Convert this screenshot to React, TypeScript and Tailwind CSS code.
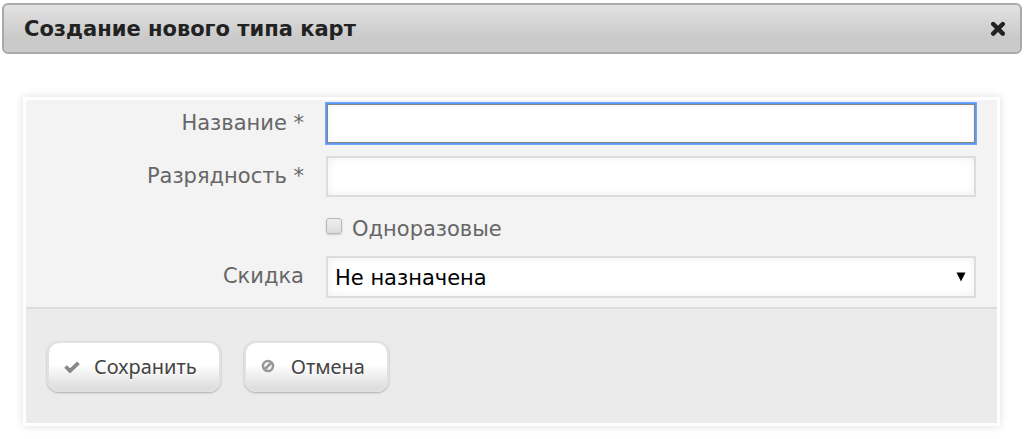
const inputClass =
  "block w-full appearance-none rounded-none border-2 border-[#dcdcdc] bg-white px-[7px] text-black shadow-[inset_0_0_8px_#eeeeee] outline-none";

const labelClass = "pr-[22px] text-right leading-10";

const buttonClass =
  "flex h-[51px] cursor-pointer items-center rounded-xl border-2 border-[#e1e1e1] bg-linear-to-b from-white from-45% to-[#dcdcdc] pr-[22px] pl-[14px] font-['Noto_Sans','Open_Sans',sans-serif] text-xl text-[#444444] shadow-[0_1px_2px_#aaaaaa] [text-shadow:0_1px_0_#ffffff]";

export default function App() {
  return (
    <div
      role="dialog"
      aria-labelledby="dialog-title"
      className="bg-white px-[2px] pt-[3px] pb-[13px] font-['DejaVu_Sans',Verdana,sans-serif] text-[21px] text-[#666666]"
    >
      <header className="flex h-[51px] items-center justify-between rounded-md border-2 border-[#aaaaaa] bg-linear-to-b from-[#e2e2e2] to-[#cacaca] to-70% pr-[14px] pl-5">
        <h1 id="dialog-title" className="pt-[2px] text-[21px] font-bold text-[#222222]">
          Создание нового типа карт
        </h1>
        <button type="button" aria-label="Закрыть" className="cursor-pointer">
          <svg width="16" height="16" viewBox="0 0 16 16" className="block">
            <path
              d="M3.2 3 L12.8 12.6 M12.8 3 L3.2 12.6"
              stroke="#222222"
              strokeWidth="4.4"
              strokeLinecap="round"
            />
          </svg>
        </button>
      </header>

      <form
        onSubmit={(e) => e.preventDefault()}
        className="mt-[43px] mr-[22px] ml-[21px] border-3 border-white bg-[#f3f3f3] shadow-[0_0_8px_#dddddd]"
      >
        <div className="grid grid-cols-[300px_1fr] pt-[3px] pr-[21px] pb-[9px]">
          <label htmlFor="name" className={labelClass}>
            Название *
          </label>
          <div className="pb-3">
            <input
              id="name"
              type="text"
              required
              className="block h-[41px] w-full border border-[#5b97f5] bg-white px-2 text-black shadow-[0_0_0_1px_#6ea6ff,inset_0_0_0_1px_#858585,inset_0_0_8px_#eeeeee] outline-none"
            />
          </div>

          <label htmlFor="digits" className={labelClass}>
            Разрядность *
          </label>
          <div className="pb-3">
            <input id="digits" type="text" required className={`h-[41px] ${inputClass}`} />
          </div>

          <div className="col-start-2 flex h-[47px] items-start">
            <label className="flex items-center leading-10">
              <input
                type="checkbox"
                className="mr-[10px] mb-[6px] size-4 appearance-none rounded-[3px] border border-[#b8b8b8] bg-linear-to-b from-[#eeeeee] to-[#dcdcdc] shadow-[0_1px_2px_#cccccc]"
              />
              Одноразовые
            </label>
          </div>

          <label htmlFor="discount" className={labelClass}>
            Скидка
          </label>
          <div className="relative">
            <select id="discount" className={`h-[42px] pt-[3px] ${inputClass}`}>
              <option>Не назначена</option>
            </select>
            <svg
              width="10"
              height="10"
              viewBox="0 0 10 10"
              className="pointer-events-none absolute top-4 right-[10px]"
            >
              <path d="M0.5 0.5 H9.5 L5 9.5 Z" fill="#000000" />
            </svg>
          </div>
        </div>

        <div className="flex gap-[23px] border-t-2 border-[#dddddd] bg-[#ebebeb] px-[21px] pt-8 pb-[31px]">
          <button type="submit" className={buttonClass}>
            <svg width="18" height="16" viewBox="0 0 18 16" className="mr-[13px]">
              <path d="M2.5 7.5 L7 11.8 L15.5 3.8" fill="none" stroke="#888888" strokeWidth="3.8" />
            </svg>
            Сохранить
          </button>
          <button type="button" className={buttonClass}>
            <svg width="16" height="16" viewBox="0 0 16 16" className="mr-[15px] mb-[2px]">
              <circle cx="8" cy="8" r="5" fill="none" stroke="#999999" strokeWidth="2.6" />
              <path d="M4.5 11.5 L11.5 4.5" stroke="#999999" strokeWidth="2.6" />
            </svg>
            Отмена
          </button>
        </div>
      </form>
    </div>
  );
}
